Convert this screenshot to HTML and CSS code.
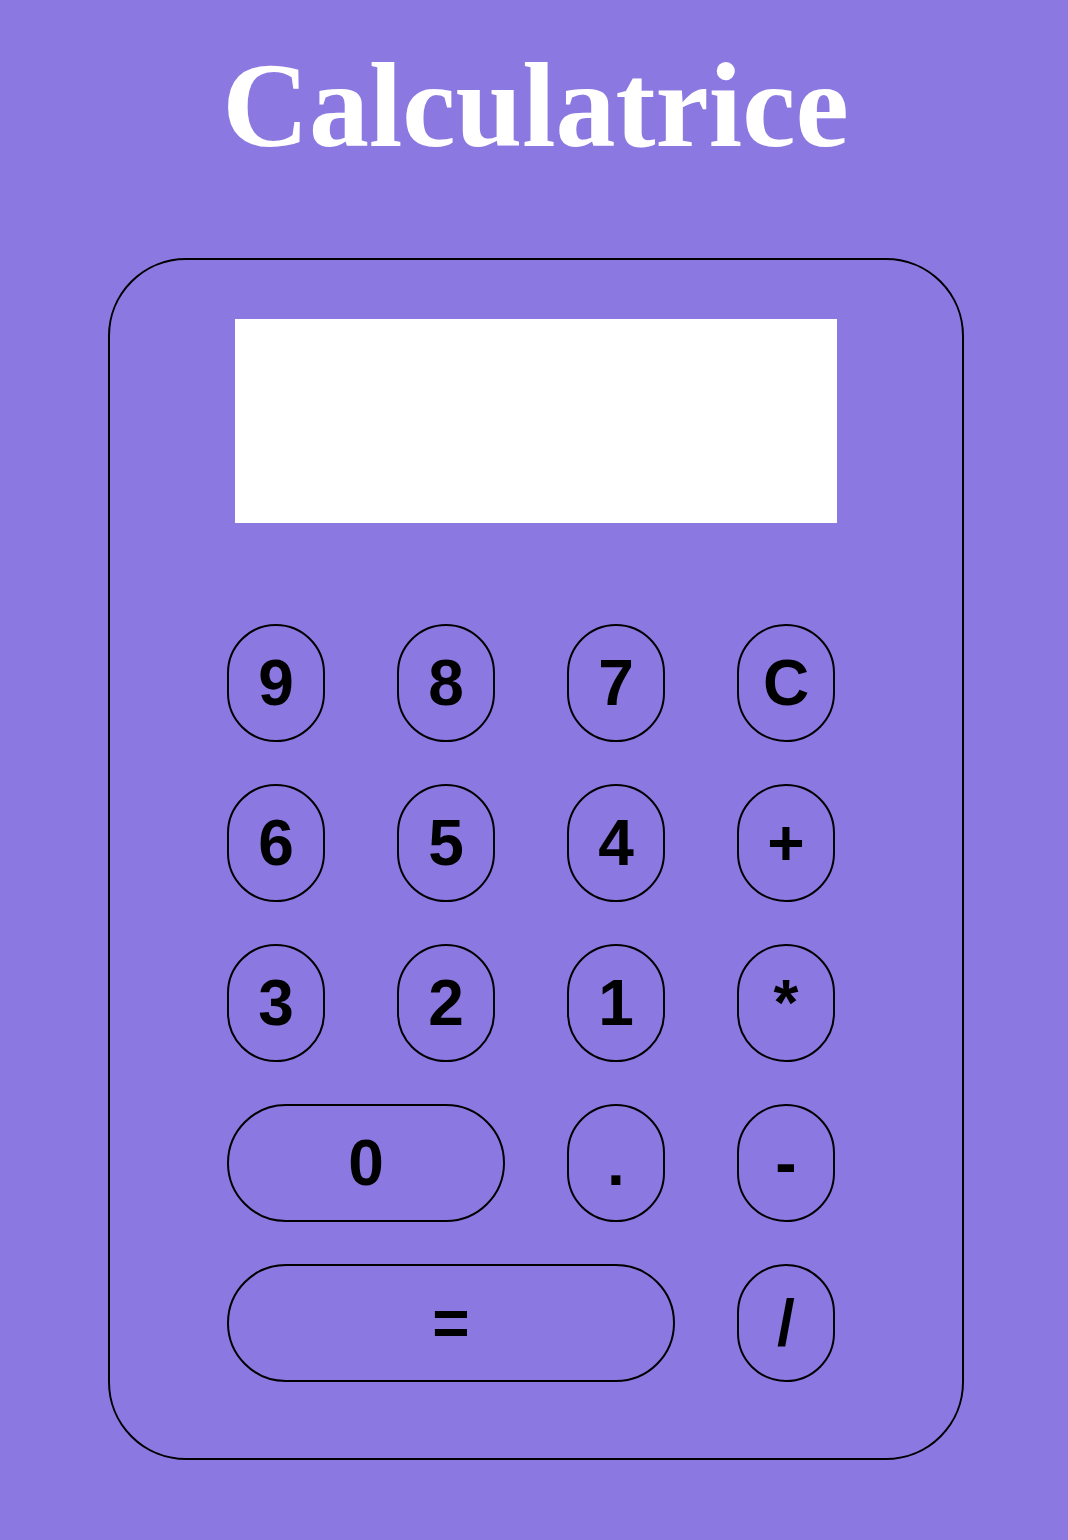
FILE: index.html
```html
<!DOCTYPE html>
<html lang="fr">
<head>
<meta charset="utf-8">
<title>Calculatrice</title>
<link rel="stylesheet" href="styles.css">
</head>
<body>
<h1 class="title">Calculatrice</h1>
<div class="calc">
  <div class="screen"></div>
  <div class="keys">
    <button class="key">9</button>
    <button class="key">8</button>
    <button class="key">7</button>
    <button class="key">C</button>
    <button class="key">6</button>
    <button class="key">5</button>
    <button class="key">4</button>
    <button class="key">+</button>
    <button class="key">3</button>
    <button class="key">2</button>
    <button class="key">1</button>
    <button class="key">*</button>
    <button class="key key-zero">0</button>
    <button class="key">.</button>
    <button class="key">-</button>
    <button class="key key-equal">=</button>
    <button class="key">/</button>
  </div>
</div>
</body>
</html>
```
FILE: styles.css
```css
html, body {
  margin: 0;
  padding: 0;
}
body {
  background: #8c78e1;
  min-height: 1540px;
  overflow: hidden;
}
.title {
  margin: 0;
  padding-top: 38px;
  height: 258px;
  box-sizing: border-box;
  text-align: center;
  font-family: "Liberation Serif", "Times New Roman", serif;
  font-weight: bold;
  font-size: 120px;
  line-height: 136px;
  color: #ffffff;
  padding-left: 3px;
}
.calc {
  box-sizing: border-box;
  width: 856px;
  height: 1202px;
  margin-left: 108px;
  border: 2px solid #000;
  border-radius: 78px;
  padding-top: 59px;
}
.screen {
  width: 602px;
  height: 204px;
  margin: 0 auto;
  background: #ffffff;
}
.keys {
  margin-top: 101px;
  margin-left: 117px;
  display: grid;
  grid-template-columns: repeat(4, 98px);
  grid-auto-rows: 118px;
  column-gap: 72px;
  row-gap: 42px;
}
.key {
  box-sizing: border-box;
  width: 98px;
  height: 118px;
  padding: 0;
  margin: 0;
  background: transparent;
  border: 2px solid #000;
  border-radius: 59px;
  font-family: "Liberation Sans", Arial, sans-serif;
  font-weight: bold;
  font-size: 64px;
  color: #000;
  display: flex;
  align-items: center;
  justify-content: center;
}
.key-zero {
  grid-column: span 2;
  width: 278px;
}
.key-equal {
  grid-column: span 3;
  width: 448px;
}
```
